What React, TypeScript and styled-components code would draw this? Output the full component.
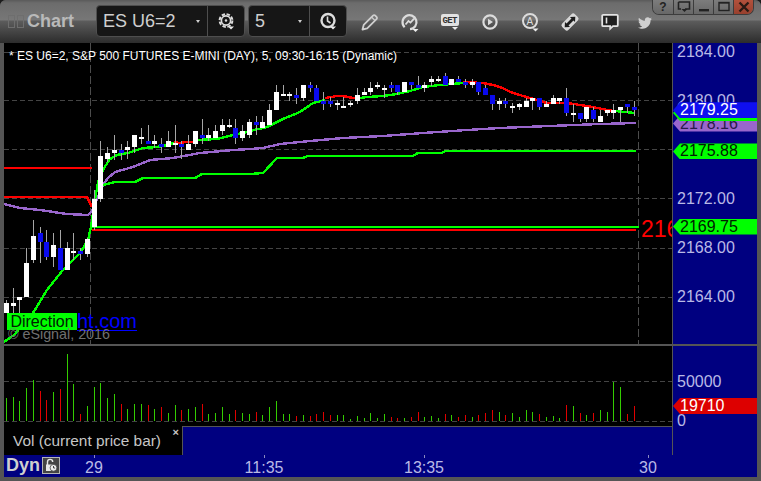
import React from "react";
import styled, { createGlobalStyle } from "styled-components";
import { FaTwitter } from "react-icons/fa";

const FONT = `"Liberation Sans", Arial, sans-serif`;
const NAVY = "#000080";
const FRAME = "#555555";

const Global = createGlobalStyle`
  html, body { margin: 0; padding: 0; background: #1c1c1c; overflow: hidden; }
  #root { width: 761px; height: 481px; }
`;

const Window = styled.div`
  width: 761px;
  height: 481px;
  display: flex;
  flex-direction: column;
  background: ${FRAME};
  border-radius: 6px 6px 0 0;
  overflow: hidden;
  font-family: ${FONT};
`;

const TitleBar = styled.header`
  height: 43px;
  flex: none;
  display: flex;
  align-items: center;
  padding-left: 8px;
  padding-right: 9px;
  box-sizing: border-box;
  background: linear-gradient(#5a5a5a 0, #6c6c6c 3px, #777777 20px, #5c5c5c 21px, #2c2c2c 43px);
`;

const Grip = styled.div`
  display: flex;
  gap: 2px;
  width: 19px;
  flex: none;
`;
const GripCell = styled.span`
  width: 5px;
  height: 11px;
  border: 1px solid #6e6e6e;
`;

const TitleText = styled.div`
  width: 69px;
  flex: none;
  font-size: 18px;
  font-weight: 700;
  color: #b9b9b9;
`;

const SelectorGroup = styled.div<{ $w: number; $gap: number }>`
  width: ${(p) => p.$w}px;
  margin-right: ${(p) => p.$gap}px;
  height: 32px;
  margin-top: -1px;
  flex: none;
  box-sizing: border-box;
  display: flex;
  border: 1px solid #4e4e4e;
  border-radius: 4px;
  background: #161616;
`;

const SelectorField = styled.div`
  flex: 1;
  display: flex;
  align-items: center;
  justify-content: space-between;
  padding: 0 7px 0 6px;
  font-size: 18px;
  color: #cfcfcf;
  border-right: 1px solid #4e4e4e;
`;

const SelectorCaret = styled.span`
  width: 0;
  height: 0;
  border-left: 2.5px solid transparent;
  border-right: 2.5px solid transparent;
  border-top: 3px solid #cfcfcf;
`;

const SelectorIconCell = styled.div`
  width: 36px;
  flex: none;
  display: flex;
  align-items: center;
  justify-content: center;
`;

const ToolSlot = styled.div<{ $w?: number }>`
  width: ${(p) => p.$w ?? 40}px;
  height: 30px;
  flex: none;
  display: flex;
  align-items: center;
  justify-content: center;
  color: #cfcfcf;
`;

const BirdSlot = styled(ToolSlot)`
  justify-content: flex-end;
  padding-top: 3px;
  box-sizing: border-box;
`;

const WindowControls = styled.div`
  align-self: flex-start;
  margin-left: auto;
  flex: none;
  display: flex;
  height: 15px;
  box-sizing: border-box;
  border: 1px solid #3c3c3c;
  border-top: none;
  border-radius: 0 0 7px 7px;
  overflow: hidden;
`;

const ControlButton = styled.div<{ $close?: boolean }>`
  width: 20px;
  height: 14px;
  display: flex;
  align-items: center;
  justify-content: center;
  box-sizing: border-box;
  border-left: 1px solid #3c3c3c;
  font-size: 12px;
  font-weight: 700;
  color: #222;
  background: ${(p) =>
    p.$close ? "linear-gradient(#b2513c, #98402e)" : "linear-gradient(#7c7c7c, #676767)"};
  &:first-child { border-left: none; }
`;

const Body = styled.main`
  flex: 1;
  display: grid;
  grid-template-columns: 669px 84px;
  grid-template-rows: 412px 22px;
  padding: 0 4px 4px 4px;
`;

const MainColumn = styled.div`
  display: flex;
  flex-direction: column;
  box-sizing: border-box;
  border-right: 1px solid ${FRAME};
  background: #000;
`;

const PricePane = styled.section`
  position: relative;
  height: 303px;
  flex: none;
  box-sizing: border-box;
  border-bottom: 2px solid ${FRAME};
  overflow: hidden;
`;

const ChartSvg = styled.svg`
  display: block;
  shape-rendering: crispEdges;
`;

const ChartHeading = styled.div`
  position: absolute;
  left: 5px;
  top: 5px;
  font-size: 12px;
  line-height: 16px;
  color: #fff;
  white-space: nowrap;
`;

const ClippedPrice = styled.div`
  position: absolute;
  left: 637px;
  top: 173px;
  font-size: 23px;
  line-height: 26px;
  color: #ff0000;
`;

const Branding = styled.div`
  position: absolute;
  left: 3px;
  top: 267px;
  display: flex;
  flex-direction: column;
`;

const LinkRow = styled.div`
  display: flex;
  align-items: flex-start;
`;

const DirectionBadge = styled.div`
  width: 70px;
  height: 17px;
  margin-top: 3px;
  background: #00ff00;
  color: #002000;
  font-size: 16px;
  line-height: 17px;
  text-align: center;
`;

const SiteLink = styled.span`
  font-size: 20px;
  line-height: 22px;
  height: 20px;
  color: #0000ff;
  border-bottom: 1px solid #0000ff;
`;

const Copyright = styled.div`
  margin-top: -4px;
  margin-left: 1px;
  font-size: 14.3px;
  line-height: 14px;
  color: #707070;
  white-space: nowrap;
`;

const VolumePane = styled.section`
  flex: 1;
  display: flex;
  flex-direction: column;
  border-bottom: 1px solid ${FRAME};
`;

const LegendBar = styled.div`
  flex: 1;
  display: flex;
`;

const LegendLabel = styled.div`
  width: 178px;
  flex: none;
  display: flex;
  justify-content: space-between;
  box-sizing: border-box;
  padding-left: 9px;
  padding-right: 3px;
  font-size: 15.4px;
  line-height: 30px;
  color: #c6c6c6;
`;

const LegendClose = styled.span`
  font-size: 11px;
  font-weight: 700;
  line-height: 12px;
  color: #c6c6c6;
`;

const LegendFill = styled.div`
  flex: 1;
  background: ${NAVY};
  border-top: 1px solid ${FRAME};
  border-left: 1px solid ${FRAME};
`;

const AxisColumn = styled.aside`
  display: flex;
  flex-direction: column;
  background: ${NAVY};
`;

const AxisSegment = styled.div<{ $h?: number }>`
  position: relative;
  box-sizing: border-box;
  ${(p) => (p.$h ? `height: ${p.$h}px; border-bottom: 2px solid ${FRAME};` : "flex: 1;")}
  overflow: hidden;
`;

const AxisLabel = styled.span.attrs<{ $y: number }>((p) => ({ style: { top: p.$y - 9 } }))<{ $y: number }>`
  position: absolute;
  left: 4px;
  line-height: 18px;
  font-size: 16px;
  color: #b9b9e6;
`;

const ValueTag = styled.span.attrs<{ $y: number }>((p) => ({ style: { top: p.$y - 8 } }))<{
  $y: number;
  $bg: string;
  $ink: string;
}>`
  position: absolute;
  left: 0;
  width: 84px;
  height: 16px;
  box-sizing: border-box;
  padding-left: 7px;
  font-size: 16px;
  line-height: 16px;
  background: ${(p) => p.$bg};
  color: ${(p) => p.$ink};
  clip-path: polygon(0 50%, 7px 0, 100% 0, 100% 100%, 7px 100%);
`;

const TimeAxis = styled.footer`
  grid-column: 1 / span 2;
  position: relative;
  display: flex;
  align-items: center;
  gap: 2px;
  padding-left: 2px;
  background: ${NAVY};
`;

const ModeText = styled.span`
  font-size: 18px;
  font-weight: 700;
  color: #cfcfcf;
  margin-top: -2px;
`;

const LockBox = styled.span`
  width: 18px;
  height: 17px;
  margin-top: -2px;
  box-sizing: border-box;
  border: 1px solid #b5b5b5;
  background: #444;
  display: flex;
  align-items: center;
  justify-content: center;
`;

const TimeTick = styled.span.attrs<{ $x: number }>((p) => ({ style: { left: p.$x } }))<{ $x: number }>`
  position: absolute;
  top: 0;
  width: 1px;
  height: 3px;
  background: #8a8ac0;
`;

const TimeLabel = styled.span.attrs<{ $x: number }>((p) => ({ style: { left: p.$x } }))<{ $x: number }>`
  position: absolute;
  top: 4px;
  transform: translateX(-50%);
  font-size: 16px;
  line-height: 18px;
  color: #b9b9e6;
`;

/* ---------- data, in page coordinates ---------- */
type Candle = [number, number, number, number, 0 | 1];
const C: Candle[] = [
  [303, 313, 300, 313, 0], [303, 306, 288, 313, 0], [297, 300, 297, 316, 0], [263, 297, 248, 297, 0],
  [236, 260, 220, 263, 0], [233, 242, 227, 263, 1], [242, 257, 230, 260, 1], [245, 257, 233, 267, 0],
  [248, 270, 230, 270, 1], [248, 270, 242, 270, 0], [251, 253, 233, 260, 0], [251, 254, 248, 260, 1],
  [239, 254, 238, 257, 0], [199, 227, 190, 230, 0], [156, 199, 141, 202, 0], [153, 159, 147, 162, 0],
  [150, 153, 135, 160, 0], [150, 153, 144, 160, 1], [147, 150, 141, 159, 0], [135, 147, 135, 153, 0],
  [137, 139, 128, 144, 0], [141, 144, 125, 144, 1], [141, 144, 135, 148, 0], [144, 147, 138, 153, 1],
  [141, 147, 131, 147, 0], [143, 145, 125, 153, 0], [144, 147, 141, 159, 1], [144, 150, 135, 150, 0],
  [131, 144, 131, 147, 0], [135, 138, 119, 144, 1], [135, 138, 128, 141, 0], [131, 138, 125, 138, 0],
  [125, 131, 119, 135, 0], [125, 127, 119, 128, 0], [128, 138, 119, 144, 1], [131, 138, 125, 141, 0],
  [122, 135, 119, 138, 0], [122, 125, 116, 135, 1], [122, 128, 116, 128, 0], [110, 125, 104, 125, 0],
  [92, 110, 85, 110, 0], [94, 96, 85, 96, 0], [94, 96, 92, 101, 0], [95, 98, 88, 104, 1],
  [85, 98, 85, 101, 0], [85, 88, 82, 92, 1], [88, 101, 85, 101, 1], [101, 104, 92, 110, 1],
  [101, 104, 97, 107, 1], [103, 105, 100, 110, 0], [106, 108, 97, 108, 0], [103, 105, 101, 107, 0],
  [95, 101, 88, 104, 0], [92, 95, 88, 95, 0], [88, 92, 82, 95, 0], [85, 87, 82, 89, 0],
  [88, 90, 85, 98, 0], [85, 88, 82, 92, 1], [85, 92, 85, 95, 1], [82, 92, 82, 92, 0],
  [82, 85, 82, 89, 1], [85, 88, 76, 88, 1], [85, 88, 82, 92, 0], [79, 82, 76, 86, 0],
  [79, 81, 76, 82, 0], [76, 85, 73, 85, 1], [79, 85, 79, 85, 0], [79, 82, 76, 82, 1],
  [82, 85, 79, 88, 1], [82, 85, 79, 88, 0], [82, 92, 82, 95, 1], [88, 95, 85, 95, 1],
  [95, 104, 95, 110, 1], [101, 104, 98, 110, 0], [101, 104, 98, 108, 1], [106, 108, 103, 113, 0],
  [104, 107, 103, 110, 0], [101, 107, 98, 107, 0], [98, 101, 98, 110, 0], [98, 107, 98, 110, 1],
  [104, 107, 101, 107, 0], [98, 104, 95, 104, 0], [98, 101, 98, 104, 0], [98, 113, 88, 116, 1],
  [113, 115, 104, 122, 0], [113, 119, 113, 122, 1], [107, 119, 107, 122, 0], [110, 119, 107, 122, 1],
  [116, 122, 110, 122, 0], [110, 113, 110, 116, 0], [110, 113, 104, 119, 0], [107, 110, 107, 122, 0],
  [104, 107, 104, 113, 1], [107, 110, 101, 116, 1],
];

const VOL: [number, 0 | 1][] = [
  [23,0],[24,0],[20,0],[33,0],[41,0],[30,1],[21,1],[29,0],[32,1],[67,0],[37,0],[7,1],[15,0],[34,0],[38,0],[23,0],
  [27,0],[17,1],[12,0],[17,0],[17,0],[16,1],[12,0],[14,1],[8,0],[16,0],[11,1],[12,0],[14,0],[17,1],[7,0],[8,0],
  [14,0],[7,0],[11,1],[8,0],[7,0],[9,1],[6,0],[14,0],[20,0],[7,0],[7,0],[5,1],[6,0],[5,1],[7,1],[9,1],[6,1],[6,0],
  [6,0],[2,0],[5,0],[3,0],[8,0],[3,0],[7,0],[4,1],[3,1],[3,0],[4,1],[9,1],[4,0],[5,0],[3,0],[7,1],[6,0],[4,1],
  [6,1],[4,0],[6,1],[8,1],[11,1],[9,0],[6,1],[8,0],[4,0],[11,0],[9,0],[7,1],[4,0],[5,0],[3,0],[16,1],[15,0],[8,1],
  [6,0],[8,1],[11,0],[9,0],[39,0],[34,0],[7,1],[15,1],
];

const barX = (i: number) => Math.floor(6.33 + 6.75 * i);

const GREEN_LINES = [
  "4,342 14,335 33,313 47,290 63,270 80,253 88,240 91,227 95,200 98,182 104,168 110,159 117,155 128,153 143,148 157,147 167,145 174,143",
  "193,142 197,140 217,139 233,135 247,132 250,131 267,127 283,119 300,112 313,103 325,100",
  "360,98 367,97 383,96 397,94 410,91 423,87 440,85 463,83",
  "553,103 565,103",
  "615,111 635,113",
];
const RED_LINES = [
  "174,142 180,143 186,142 193,142",
  "325,98 331,97 337,96 343,96 353,98 360,98",
  "463,82 483,83 493,85 500,87 513,93 530,98 547,103 567,103 587,106 613,111",
  "4,168 92,168",
  "4,197 87,197 92,207",
];
const PURPLE =
  "4,204 20,208 40,210 67,214 88,215 92,211 103,185 108,178 115,172 133,167 150,160 173,158 200,153 233,150 250,149 263,148 280,144 310,141 343,138 383,136 423,133 467,130 500,128 550,126 600,124 636,123";
const LIME =
  "98,186 103,185 115,182 135,182 143,178 195,178 202,174 250,174 263,173 277,158 303,158 308,156 413,156 418,153 442,153 445,151 636,151";

const priceY = (p: number) => 52 + (2184 - p) * 12.25;

/* ---------- icons ---------- */
const CaretMark: React.FC<{ x: number; y: number }> = ({ x, y }) => (
  <path d={`M${x} ${y}h6l-3 3z`} fill="#eee" />
);

const GearIcon = () => (
  <svg width="20" height="20" viewBox="0 0 20 20">
    <circle cx="10" cy="9.5" r="6.4" fill="none" stroke="#dcdcdc" strokeWidth="2" strokeDasharray="3.4 1.6" />
    <circle cx="10" cy="9.5" r="4.6" fill="none" stroke="#dcdcdc" strokeWidth="1.6" />
    <circle cx="10" cy="9.5" r="1.2" fill="#dcdcdc" />
    <CaretMark x={12} y={15.5} />
  </svg>
);
const ClockIcon = () => (
  <svg width="20" height="20" viewBox="0 0 20 20">
    <circle cx="10" cy="9.5" r="6.5" fill="none" stroke="#dcdcdc" strokeWidth="2.4" />
    <path d="M9.5 5.5v4.5l3 2" fill="none" stroke="#dcdcdc" strokeWidth="1.6" />
    <CaretMark x={12} y={15.5} />
  </svg>
);
const PencilIcon = () => (
  <svg width="20" height="20" viewBox="0 0 20 20">
    <path d="M2.5 17.5l1.2-4.6L13 3.6a1.6 1.6 0 0 1 2.3 0l1.2 1.2a1.6 1.6 0 0 1 0 2.3L7.2 16.4z" fill="none" stroke="#cfcfcf" strokeWidth="1.8" strokeLinejoin="round" />
    <path d="M11.5 5l3.6 3.6" stroke="#cfcfcf" strokeWidth="1.2" />
  </svg>
);
const ReplayChartIcon = () => (
  <svg width="24" height="24" viewBox="0 0 24 24">
    <path d="M6.6 17.2A7 7 0 1 1 12 19.2" fill="none" stroke="#dcdcdc" strokeWidth="2.2" />
    <path d="M7.5 14.5l3-3.5 2 1.6 3.6-4" fill="none" stroke="#dcdcdc" strokeWidth="1.8" />
    <CaretMark x={14.5} y={19} />
  </svg>
);
const GetText = styled.text`
  font-family: "Liberation Mono", monospace;
  font-size: 9px;
  font-weight: 700;
  fill: #333;
`;
const GetIcon = () => (
  <svg width="24" height="24" viewBox="0 0 24 24">
    <rect x="3" y="4" width="18" height="12" rx="2" fill="#e2e2e2" />
    <GetText x="4.5" y="13.4" textLength="15">GET</GetText>
    <CaretMark x={14} y={17} />
  </svg>
);
const PlayIcon = () => (
  <svg width="20" height="20" viewBox="0 0 20 20">
    <circle cx="10" cy="10" r="6.6" fill="none" stroke="#dcdcdc" strokeWidth="2.2" />
    <path d="M8 6.7l5 3.3-5 3.3z" fill="#dcdcdc" />
  </svg>
);
const AlertText = styled.text`
  font-family: ${FONT};
  font-size: 10px;
  fill: #dcdcdc;
`;
const AlertIcon = () => (
  <svg width="24" height="24" viewBox="0 0 24 24">
    <circle cx="12" cy="11" r="7" fill="none" stroke="#dcdcdc" strokeWidth="2" />
    <AlertText x="8.4" y="14.6">A</AlertText>
    <CaretMark x={14.5} y={18.5} />
  </svg>
);
const SwapIcon = () => (
  <svg width="22" height="22" viewBox="0 0 22 22">
    <g transform="rotate(-45 11 11)">
      <rect x="2" y="6.5" width="18" height="9" rx="2.5" fill="#d8d8d8" />
      <path d="M3.5 11l4-3.6v2.2h7V7.4l4 3.6-4 3.6v-2.2h-7v2.2z" fill="#1c1c1c" />
    </g>
  </svg>
);
const MessageIcon = () => (
  <svg width="20" height="20" viewBox="0 0 20 20">
    <path d="M3.2 2.8h13.6a1 1 0 0 1 1 1v9.4a1 1 0 0 1-1 1H13l-2.8 2.6v-2.6H3.2a1 1 0 0 1-1-1V3.8a1 1 0 0 1 1-1z" fill="#1f1f1f" stroke="#e4e4e4" strokeWidth="1.8" />
    <path d="M6.5 5.5v6" stroke="#e4e4e4" strokeWidth="1.6" />
  </svg>
);
const RestoreDropIcon = () => (
  <svg width="14" height="12" viewBox="0 0 14 12">
    <path d="M1.5 1h11v7H8" fill="none" stroke="#222" strokeWidth="1.6" />
    <path d="M1.5 1v7H4" fill="none" stroke="#222" strokeWidth="1.6" />
    <path d="M4.5 8h6l-3 3z" fill="#222" />
  </svg>
);
const MinimizeIcon = () => (
  <svg width="14" height="12" viewBox="0 0 14 12">
    <rect x="2" y="8" width="10" height="2.4" fill="#222" />
  </svg>
);
const MaximizeIcon = () => (
  <svg width="14" height="12" viewBox="0 0 14 12">
    <rect x="2" y="1.5" width="10" height="8" fill="none" stroke="#222" strokeWidth="1.4" />
    <rect x="2" y="1" width="10" height="1.6" fill="#222" />
  </svg>
);
const CloseIcon = () => (
  <svg width="14" height="12" viewBox="0 0 14 12">
    <path d="M2.5 1.5l9 9M11.5 1.5l-9 9" stroke="#2a1a14" strokeWidth="2.4" />
  </svg>
);
const LockIcon = () => (
  <svg width="14" height="14" viewBox="0 0 14 14">
    <path d="M3.5 7V4a2.6 2.6 0 0 1 5.2 0" fill="none" stroke="#e8e8e8" strokeWidth="1.4" />
    <rect x="2" y="6.5" width="7" height="6.5" fill="#e8e8e8" />
    <circle cx="9.5" cy="9.8" r="3.4" fill="#ededed" stroke="#444" strokeWidth="0.8" />
    <path d="M9.5 8v2h1.6" fill="none" stroke="#333" strokeWidth="0.9" />
  </svg>
);

/* ---------- panes ---------- */
const Line: React.FC<{ points: string; color: string; w?: number }> = ({ points, color, w = 2.4 }) => (
  <polyline points={points} fill="none" stroke={color} strokeWidth={w} />
);

const PriceChart = () => (
  <ChartSvg width={668} height={301} viewBox="4 43 668 301">
    {[52, 100, 149, 198, 248, 297].map((y) => (
      <line key={y} x1={4} x2={672} y1={y + 0.5} y2={y + 0.5} stroke="#444" strokeDasharray="5 3" />
    ))}
    {[90, 638].map((x) => (
      <line key={x} x1={x + 0.5} x2={x + 0.5} y1={43} y2={344} stroke="#4c4c4c" strokeDasharray="8 3" />
    ))}
    <Line points="92,227 639,227" color="#00ff00" w={2} />
    <Line points="92,230 636,230" color="#ff0000" w={2} />
    <Line points={PURPLE} color="#9966cc" />
    <Line points={LIME} color="#00ff00" />
    {GREEN_LINES.map((p) => (
      <Line key={p} points={p} color="#00ff00" />
    ))}
    {RED_LINES.map((p) => (
      <Line key={p} points={p} color="#ff0000" />
    ))}
    {C.map(([top, bottom, high, low, down], i) => (
      <g key={i}>
        <rect x={barX(i)} y={high} width={1} height={low - high} fill="#a6a6a6" />
        <rect x={barX(i) - 2} y={top} width={5} height={bottom - top} fill={down ? "#0a0aee" : "#ffffff"} />
      </g>
    ))}
  </ChartSvg>
);

const VolumeChart = () => (
  <ChartSvg width={668} height={80} viewBox="4 346 668 80">
    {[381, 421].map((y) => (
      <line key={y} x1={4} x2={672} y1={y + 0.5} y2={y + 0.5} stroke="#444" strokeDasharray="5 3" />
    ))}
    {VOL.map(([h, red], i) => (
      <rect key={i} x={barX(i)} y={421 - h} width={1} height={h} fill={red ? "#e00000" : "#33cc00"} />
    ))}
  </ChartSvg>
);

const PRICE_LABELS = [2184, 2180, 2172, 2168, 2164];

export default function App() {
  return (
    <>
      <Global />
      <Window>
        <TitleBar>
          <Grip>
            <GripCell />
            <GripCell />
          </Grip>
          <TitleText>Chart</TitleText>
          <SelectorGroup $w={149} $gap={3}>
            <SelectorField>
              ES U6=2
              <SelectorCaret />
            </SelectorField>
            <SelectorIconCell>
              <GearIcon />
            </SelectorIconCell>
          </SelectorGroup>
          <SelectorGroup $w={99} $gap={3}>
            <SelectorField>
              5
              <SelectorCaret />
            </SelectorField>
            <SelectorIconCell>
              <ClockIcon />
            </SelectorIconCell>
          </SelectorGroup>
          <ToolSlot><PencilIcon /></ToolSlot>
          <ToolSlot><ReplayChartIcon /></ToolSlot>
          <ToolSlot><GetIcon /></ToolSlot>
          <ToolSlot><PlayIcon /></ToolSlot>
          <ToolSlot><AlertIcon /></ToolSlot>
          <ToolSlot><SwapIcon /></ToolSlot>
          <ToolSlot><MessageIcon /></ToolSlot>
          <BirdSlot $w={22}><FaTwitter size={14} /></BirdSlot>
          <WindowControls>
            <ControlButton>?</ControlButton>
            <ControlButton><RestoreDropIcon /></ControlButton>
            <ControlButton><MinimizeIcon /></ControlButton>
            <ControlButton><MaximizeIcon /></ControlButton>
            <ControlButton $close><CloseIcon /></ControlButton>
          </WindowControls>
        </TitleBar>
        <Body>
          <MainColumn>
            <PricePane>
              <PriceChart />
              <ChartHeading>* ES U6=2, S&amp;P 500 FUTURES E-MINI (DAY), 5, 09:30-16:15 (Dynamic)</ChartHeading>
              <ClippedPrice>2169.75</ClippedPrice>
              <Branding>
                <LinkRow>
                  <DirectionBadge>Direction</DirectionBadge>
                  <SiteLink>ht.com</SiteLink>
                </LinkRow>
                <Copyright>© eSignal, 2016</Copyright>
              </Branding>
            </PricePane>
            <VolumePane>
              <VolumeChart />
              <LegendBar>
                <LegendLabel>
                  Vol (current price bar)
                  <LegendClose>×</LegendClose>
                </LegendLabel>
                <LegendFill />
              </LegendBar>
            </VolumePane>
          </MainColumn>
          <AxisColumn>
            <AxisSegment $h={303}>
              {PRICE_LABELS.map((p) => (
                <AxisLabel key={p} $y={priceY(p) - 43}>{p.toFixed(2)}</AxisLabel>
              ))}
              <ValueTag $y={priceY(2178.16) - 43} $bg="#9966cc" $ink="#2a1a4a">2178.16</ValueTag>
              <ValueTag $y={70} $bg="#00ff00" $ink="#002000" />
              <ValueTag $y={priceY(2179.25) - 43} $bg="#0f0ff0" $ink="#ffffff">2179.25</ValueTag>
              <ValueTag $y={priceY(2175.88) - 43} $bg="#00ff00" $ink="#002000">2175.88</ValueTag>
              <ValueTag $y={priceY(2169.75) - 43} $bg="#00ff00" $ink="#002000">2169.75</ValueTag>
            </AxisSegment>
            <AxisSegment>
              <AxisLabel $y={36}>50000</AxisLabel>
              <AxisLabel $y={75}>0</AxisLabel>
              <ValueTag $y={60} $bg="#dd0000" $ink="#ffffff">19710</ValueTag>
            </AxisSegment>
          </AxisColumn>
          <TimeAxis>
            <ModeText>Dyn</ModeText>
            <LockBox><LockIcon /></LockBox>
            {[
              [90, "29"],
              [260, "11:35"],
              [420, "13:35"],
              [644, "30"],
            ].map(([x, t]) => (
              <React.Fragment key={t as string}>
                <TimeTick $x={x as number} />
                <TimeLabel $x={x as number}>{t as string}</TimeLabel>
              </React.Fragment>
            ))}
          </TimeAxis>
        </Body>
      </Window>
    </>
  );
}
